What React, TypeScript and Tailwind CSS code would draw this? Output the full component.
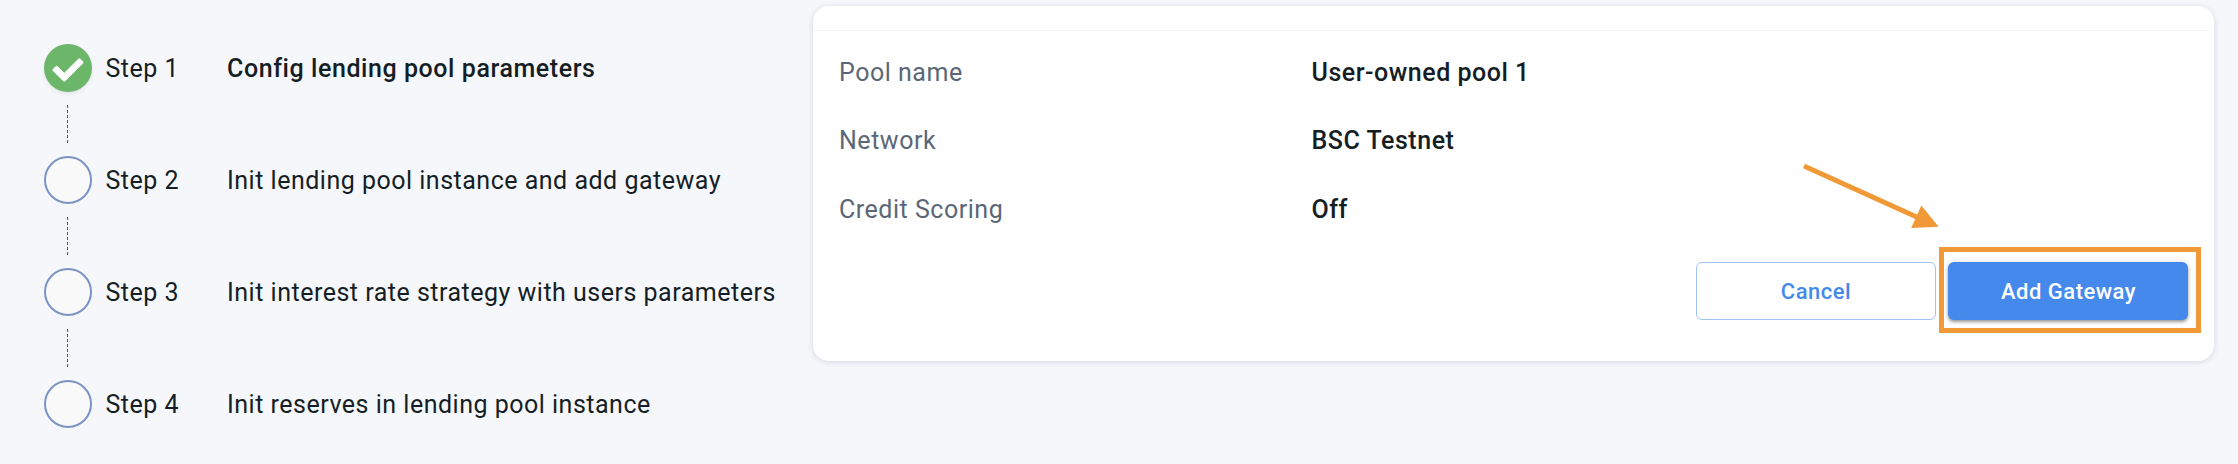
import { FaCheck } from "react-icons/fa";

const steps = [
  { title: "Config lending pool parameters", done: true },
  { title: "Init lending pool instance and add gateway", done: false },
  { title: "Init interest rate strategy with users parameters", done: false },
  { title: "Init reserves in lending pool instance", done: false },
];

const details = [
  { label: "Pool name", value: "User-owned pool 1" },
  { label: "Network", value: "BSC Testnet" },
  { label: "Credit Scoring", value: "Off" },
];

function Connector() {
  return (
    <svg className="my-[13px] ml-[23px] block" width="1" height="38" viewBox="0 0 1 38">
      <path d="M.5 0V38" stroke="#4c5663" strokeWidth="1" strokeDasharray="3 2" />
    </svg>
  );
}

function Steps() {
  return (
    <ol className="w-[769px] shrink-0 pt-11">
      {steps.map((step, i) => (
        <li key={step.title}>
          <div className="flex h-12 items-center text-[25px] tracking-[0.5px] text-[#151e24]">
            {step.done ? (
              <span className="flex size-12 items-center justify-center rounded-full bg-[#6cb66a] pt-[3px] pr-px text-[30px] text-white shadow-[0_2px_4px_rgba(0,0,0,0.08)]">
                <FaCheck className="overflow-visible stroke-white [stroke-linejoin:round] [stroke-width:14]" />
              </span>
            ) : (
              <span className="size-12 rounded-full border-2 border-[#7b93c3] bg-[#f9f9f9]" />
            )}
            <span className="ml-[13.5px] w-[121.5px] pt-0.5">Step {i + 1}</span>
            <span className={step.done ? "pt-0.5 font-medium tracking-[0.57px]" : "pt-0.5"}>{step.title}</span>
          </div>
          {i < steps.length - 1 && <Connector />}
        </li>
      ))}
    </ol>
  );
}

function PoolCard() {
  return (
    <section className="mt-[6px] flex h-[355px] w-[1401px] flex-col rounded-2xl bg-white shadow-[0_1px_6px_rgba(20,30,50,0.14)]">
      <div className="h-[25px] border-b border-[#f7f7f8]" />
      <dl className="flex flex-col pt-[7px] pl-[26px]">
        {details.map((d) => (
          <div key={d.label} className="flex h-[68.5px] items-center text-[25px] tracking-[0.52px]">
            <dt className="w-[472.5px] text-[#5b6776]">{d.label}</dt>
            <dd className="font-medium text-[#151e24]">{d.value}</dd>
          </div>
        ))}
      </dl>
      <div className="mt-auto mr-[26px] mb-[41px] flex justify-end gap-3 text-[22px] font-medium tracking-[0.5px]">
        <button className="h-[58px] w-60 rounded-md border border-[#9fc3f6] text-[#4489eb]">Cancel</button>
        <div className="relative">
          <button className="block h-[58px] w-60 rounded-md bg-[#4489eb] pl-px text-white shadow-[0_2px_3px_rgba(0,0,0,0.35),0_0_8px_rgba(0,0,0,0.12)]">
            Add Gateway
          </button>
          <div className="pointer-events-none absolute -top-[15px] -left-[8.6px] h-[86px] w-[261.4px] border-[5px] border-[#f19937]" />
          <svg className="pointer-events-none absolute -top-[102px] -left-[148px]" width="144" height="72" viewBox="0 0 144 72">
            <path d="M4 6 L120 58.5" stroke="#f19937" strokeWidth="5" />
            <path d="M121.3 45.5 L138.7 66.7 L111.2 68 Z" fill="#f19937" />
          </svg>
        </div>
      </div>
    </section>
  );
}

export default function App() {
  return (
    <main className="flex h-[464px] w-[2238px] items-start overflow-hidden bg-[#f5f7fb] pl-11 font-['Roboto',sans-serif]">
      <Steps />
      <PoolCard />
    </main>
  );
}
